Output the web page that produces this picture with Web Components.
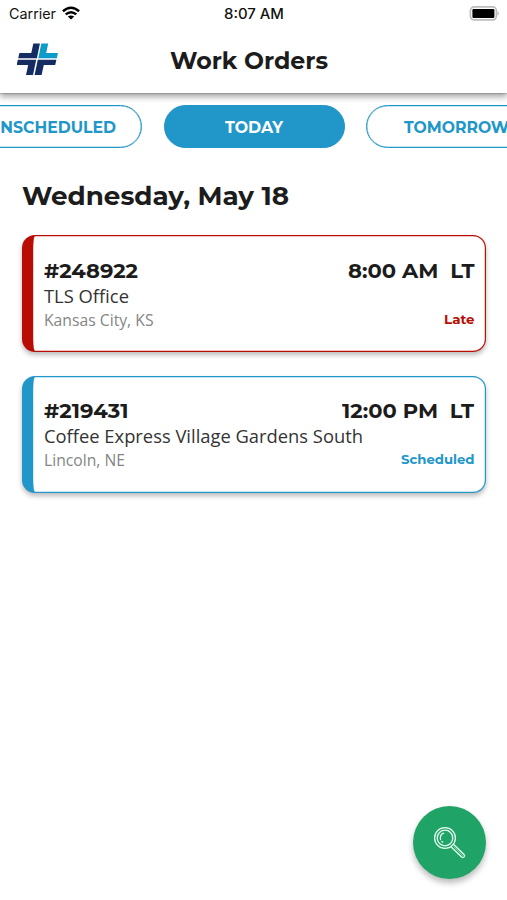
<!DOCTYPE html>
<html lang="en">
<head>
<meta charset="utf-8">
<title>Work Orders</title>
<style>
html,body{margin:0;height:100%;background:#fff;overflow:hidden}
body{font-family:Montserrat,Inter,"Open Sans",sans-serif;color:#1c1c1c}
</style>
</head>
<body>
<work-app></work-app>
<script>
const define = (name, html, setup) => customElements.define(name, class extends HTMLElement {
  connectedCallback() {
    if (this.shadowRoot) return;
    this.attachShadow({mode: 'open'}).innerHTML = html;
    if (setup) setup(this, this.shadowRoot);
  }
});

// One line of text whose glyphs are stretched to the width given in pixels.
define('fit-text', `<style>
:host{display:inline-block;white-space:pre;flex:none}
span{display:inline-block;transform-origin:0 50%}
</style><span></span>`, (el, root) => {
  const span = root.querySelector('span');
  span.textContent = el.getAttribute('text');
  const target = +el.getAttribute('width');
  const natural = span.getBoundingClientRect().width;
  span.style.transform = `scaleX(${target / natural})`;
  span.style.marginRight = `${target - natural}px`;
  el.style.width = `${target}px`;
});

define('status-bar', `<style>
:host{display:grid;grid-template-columns:1fr auto 1fr;align-items:center;height:28px;padding:0 7px 0 9px;box-sizing:border-box;font:400 14px/28px Inter,sans-serif;color:#111}
.left{display:flex;align-items:center;gap:6px}
.time{font-weight:500;font-size:14px;margin-left:-2px}
.battery{justify-self:end;display:block;margin-top:-1px}
.wifi{display:block;margin-top:-2px}
</style>
<div class="left"><fit-text text="Carrier" width="47"></fit-text>
<svg class="wifi" width="18" height="14" viewBox="0 0 18 14" fill="none" stroke="#000" stroke-width="2.5"><path d="M.9 5.2Q9-1.8 17.1 5.2"/><path d="M3.7 8.4Q9 4 14.3 8.4"/><path d="M9 13.6L5.8 10.6Q9 8.2 12.2 10.6Z" fill="#000" stroke="none"/></svg></div>
<fit-text class="time" text="8:07 AM" width="60"></fit-text>
<svg class="battery" width="31" height="15" viewBox="0 0 31 15"><rect x="1.4" y=".9" width="26" height="13" rx="3.8" fill="#fff" stroke="#bdbdbd" stroke-width="1.7"/><rect x="3.4" y="3" width="22" height="9" rx="1.2" fill="#000"/><path d="M28.6 5.2Q31 7.4 28.6 9.6Z" fill="#aaa"/></svg>`);

define('app-logo', `<style>:host{display:block}svg{display:block}</style>
<svg width="42" height="34" viewBox="17 42 42 34" fill="#152c62">
<path d="M33.3 43.5H39.9L36.9 58.2H18.2L19.4 52.9H31.3Z"/>
<path d="M41.3 43.5H48.2L46.2 52.9H58L56.8 58.2H38.3Z" fill="#0d9bca"/>
<path d="M17.8 59.8H36.2L33 75H26L28.2 65H16.7Z"/>
<path d="M37.8 59.8H56.4L55.2 65H43.8L41.6 75H34.6Z"/>
</svg>`);

define('app-header', `<style>
:host{display:grid;grid-template-columns:1fr auto 1fr;align-items:center;height:65px;padding:0 22px 0 17px;box-sizing:border-box;font-size:23.6px;font-weight:700;line-height:30px}
app-logo{margin-top:-3px}
::slotted(fit-text){margin-left:-3px;margin-right:2px}
</style><app-logo></app-logo><slot></slot><span></span>`);

define('tab-pill', `<style>
:host{display:flex;flex:none;align-items:center;justify-content:center;width:181px;height:43px;box-sizing:border-box;border:1px solid #2196c9;box-shadow:inset 0 0 0 .3px #2196c9;border-radius:22px;color:#2196c9;font-size:15.7px;font-weight:700;line-height:20px;background:#fff;padding-top:2px}
:host([selected]){background:#2196c9;color:#fff}
</style><slot></slot>`);

define('tab-strip', `<style>
:host{display:flex;justify-content:center;gap:21.5px;padding:12px 0 0 1px;overflow:hidden}
</style><slot></slot>`);

define('work-card', `<style>
:host{display:block;box-sizing:border-box;height:117px;border:1px solid var(--tone);border-left-width:11px;border-radius:13px;background:#fff;padding:22.5px 10.5px 0 11px;box-shadow:inset 0 0 0 .2px var(--tone),0 3px 5px rgba(0,0,0,.27)}
.row{display:flex;justify-content:space-between;align-items:center}
.top{height:23px;font-size:20.8px;font-weight:700;line-height:23px}
.site{height:27px;font:400 18.4px/27px "Open Sans",sans-serif;color:#333}
.foot{height:22px;line-height:22px}
.place{font:400 15.8px/22px "Open Sans",sans-serif;color:#858585}
.state{font-size:13.2px;font-weight:700;line-height:20px;color:var(--tone);margin-top:-1.4px}
</style>
<div class="row top"><slot name="number"></slot><slot name="time"></slot></div>
<div class="row site"><slot name="site"></slot></div>
<div class="row foot"><span class="place"><slot name="place"></slot></span><span class="state"><slot name="state"></slot></span></div>`);

define('search-button', `<style>
:host{position:absolute;right:21px;bottom:21px;width:73px;height:73px;border-radius:50%;background:#20a366;box-shadow:0 4px 6px rgba(0,0,0,.27)}
svg{display:block}
</style>
<svg width="73" height="73" viewBox="413 806 73 73" fill="none" stroke="#e2fff0" stroke-width="1.3" stroke-linecap="round" stroke-linejoin="round">
<circle cx="445" cy="838" r="10.4"/><circle cx="445" cy="838" r="7.8"/>
<path d="M440.5 839.5Q439.6 834.5 443.7 833.2M441.9 841.4L442.7 842.1"/>
<path d="M450.9 846.7L461.6 857Q463 858 464.1 856.9Q465.2 855.7 464 854.5L453.5 844.2"/><path d="M453.8 846.8L462.6 855.5" stroke-width=".5"/>
</svg>`);

define('work-app', `<style>
:host{display:block;position:relative;width:507px;height:900px;overflow:hidden;background:#fff}
.bar{position:relative;z-index:1;background:#fff;box-shadow:0 1px 1px rgba(0,0,0,.15),0 4px 6px rgba(0,0,0,.34)}
main{padding:0 21.5px}
h1{margin:29px 0 19px;height:39px;font-size:26.1px;font-weight:700;line-height:39px;display:flex}
.list{display:flex;flex-direction:column;gap:23.5px}
.late{--tone:#b90d04}.planned{--tone:#2196c9}
</style>
<div class="bar"><status-bar></status-bar><app-header><fit-text text="Work Orders" width="158"></fit-text></app-header></div>
<tab-strip>
<tab-pill><fit-text text="UNSCHEDULED" width="128"></fit-text></tab-pill>
<tab-pill selected><fit-text text="TODAY" width="58"></fit-text></tab-pill>
<tab-pill><fit-text text="TOMORROW" width="105"></fit-text></tab-pill>
</tab-strip>
<main>
<h1><fit-text text="Wednesday, May 18" width="267"></fit-text></h1>
<div class="list">
<work-card class="late"><fit-text slot="number" text="#248922" width="94"></fit-text><fit-text slot="time" text="8:00 AM  LT" width="126.5"></fit-text><fit-text slot="site" text="TLS Office" width="85"></fit-text><fit-text slot="place" text="Kansas City, KS" width="109.5"></fit-text><fit-text slot="state" text="Late" width="30.5"></fit-text></work-card>
<work-card class="planned"><fit-text slot="number" text="#219431" width="84.5"></fit-text><fit-text slot="time" text="12:00 PM  LT" width="132"></fit-text><fit-text slot="site" text="Coffee Express Village Gardens South" width="319"></fit-text><fit-text slot="place" text="Lincoln, NE" width="81"></fit-text><fit-text slot="state" text="Scheduled" width="73.5"></fit-text></work-card>
</div>
</main>
<search-button></search-button>`);
</script>
</body>
</html>
